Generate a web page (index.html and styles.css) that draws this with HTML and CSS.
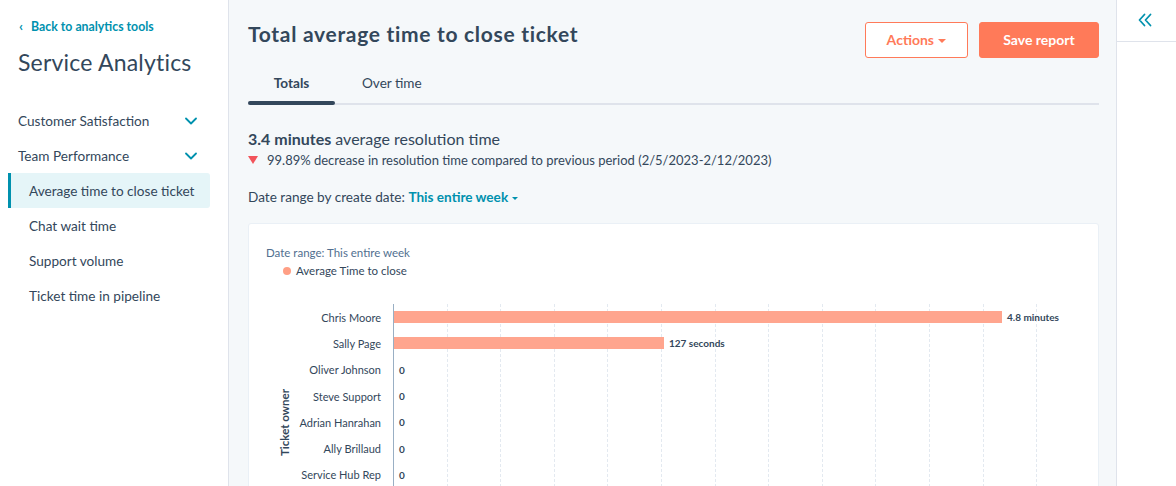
FILE: index.html
```html
<!DOCTYPE html>
<html>
<head>
<meta charset="utf-8">
<link rel="stylesheet" href="styles.css">
</head>
<body>
<div class="app">
  <aside class="sidebar">
    <a class="back" href="#"><span class="back-chev">‹</span>Back to analytics tools</a>
    <h1 class="side-title">Service Analytics</h1>
    <nav class="nav">
      <div class="nav-group">Customer Satisfaction
        <svg class="chev" width="12" height="8" viewBox="0 0 12 8"><path d="M1 1.5 L6 6.5 L11 1.5" fill="none" stroke="#0091ae" stroke-width="1.8" stroke-linecap="round" stroke-linejoin="round"/></svg>
      </div>
      <div class="nav-group">Team Performance
        <svg class="chev" width="12" height="8" viewBox="0 0 12 8"><path d="M1 1.5 L6 6.5 L11 1.5" fill="none" stroke="#0091ae" stroke-width="1.8" stroke-linecap="round" stroke-linejoin="round"/></svg>
      </div>
      <div class="nav-item active">Average time to close ticket</div>
      <div class="nav-item">Chat wait time</div>
      <div class="nav-item">Support volume</div>
      <div class="nav-item">Ticket time in pipeline</div>
    </nav>
  </aside>

  <main class="main">
    <header class="header">
      <h2 class="title">Total average time to close ticket</h2>
      <div class="actions">
        <button class="btn btn-secondary">Actions <span class="caret"></span></button>
        <button class="btn btn-primary">Save report</button>
      </div>
    </header>
    <div class="tabs">
      <div class="tab active">Totals</div>
      <div class="tab">Over time</div>
    </div>

    <section class="summary">
      <p class="headline"><strong>3.4 minutes</strong> average resolution time</p>
      <p class="change"><span class="down"></span>99.89% decrease in resolution time compared to previous period (2/5/2023-2/12/2023)</p>
      <p class="range">Date range by create date: <a class="range-link" href="#">This entire week <span class="caret small"></span></a></p>
    </section>

    <section class="card">
      <div class="card-meta">Date range: This entire week</div>
      <div class="legend"><span class="dot"></span>Average Time to close</div>
      <div class="chart">
        <div class="axis-title"><span>Ticket owner</span></div>
        <div class="labels">
          <div class="lbl">Chris Moore</div>
          <div class="lbl">Sally Page</div>
          <div class="lbl">Oliver Johnson</div>
          <div class="lbl">Steve Support</div>
          <div class="lbl">Adrian Hanrahan</div>
          <div class="lbl">Ally Brillaud</div>
          <div class="lbl">Service Hub Rep</div>
        </div>
        <div class="plot">
          <div class="row"><div class="bar" style="width:608px"></div><span class="val">4.8 minutes</span></div>
          <div class="row"><div class="bar" style="width:270px"></div><span class="val">127 seconds</span></div>
          <div class="row"><span class="val">0</span></div>
          <div class="row"><span class="val">0</span></div>
          <div class="row"><span class="val">0</span></div>
          <div class="row"><span class="val">0</span></div>
          <div class="row"><span class="val">0</span></div>
        </div>
      </div>
    </section>
  </main>

  <aside class="rail">
    <div class="rail-top">
      <svg width="16" height="14" viewBox="0 0 16 14"><path d="M7.5 1.5 L2.5 7 L7.5 12.5 M13.5 1.5 L8.5 7 L13.5 12.5" fill="none" stroke="#0091ae" stroke-width="1.8" stroke-linecap="round" stroke-linejoin="round"/></svg>
    </div>
  </aside>
</div>
</body>
</html>
```

FILE: styles.css
```css
* { box-sizing: border-box; }
html, body { margin: 0; padding: 0; }
body {
  font-family: "Lato", "Noto Sans", sans-serif;
  color: #33475b;
  background: #fff;
  width: 1176px;
  height: 486px;
  overflow: hidden;
}
p, h1, h2 { margin: 0; }
a { text-decoration: none; }

.app { display: flex; height: 486px; }

/* Sidebar */
.sidebar {
  width: 229px;
  flex: none;
  border-right: 1px solid #dfe3eb;
  padding: 18px 18px 0 8px;
}
.back {
  display: flex;
  align-items: center;
  color: #0091ae;
  font-size: 12.3px;
  font-weight: 700;
  padding-left: 11px;
  height: 16px;
}
.back-chev { font-size: 14px; margin-right: 8px; line-height: 1; }
.side-title {
  font-size: 23px;
  font-weight: 400;
  margin: 13px 0 0 10px;
  line-height: 30px;
  letter-spacing: 0.2px;
}
.nav { margin-top: 30px; display: flex; flex-direction: column; }
.nav-group, .nav-item {
  height: 35px;
  display: flex;
  align-items: center;
  font-size: 13.6px;
}
.nav-group { padding-left: 10px; justify-content: space-between; padding-right: 13px; }
.nav-item { padding-left: 21px; border-radius: 0 3px 3px 0; }
.nav-item.active {
  background: #e5f5f8;
  border-left: 3px solid #0091ae;
  padding-left: 18px;
}
.nav-group:first-child { margin-top: -4px; }

/* Main */
.main {
  flex: 1;
  background: #f5f8fa;
  padding: 0 17px 0 19px;
  border-right: 1px solid #dfe3eb;
  display: flex;
  flex-direction: column;
  min-width: 0;
}
.header {
  display: flex;
  justify-content: space-between;
  align-items: center;
  padding-top: 22px;
  height: 57px;
}
.title { font-size: 21px; font-weight: 700; letter-spacing: 0.7px; margin-top: -12px; }
.actions { display: flex; gap: 11px; }
.btn {
  height: 36px;
  font-family: inherit;
  font-size: 14px;
  font-weight: 700;
  border-radius: 3px;
  padding: 0;
  cursor: pointer;
}
.btn-secondary {
  width: 103px;
  background: #fff;
  color: #ff7a59;
  border: 1px solid #ff7a59;
}
.btn-primary {
  width: 120px;
  background: #ff7a59;
  color: #fff;
  border: 1px solid #ff7a59;
}
.caret {
  display: inline-block;
  width: 0; height: 0;
  border-left: 4px solid transparent;
  border-right: 4px solid transparent;
  border-top: 4px solid currentColor;
  vertical-align: middle;
  margin-left: 1px;
}
.caret.small { border-left-width: 3.5px; border-right-width: 3.5px; border-top-width: 3.5px; }

.tabs {
  display: flex;
  margin-top: 6px;
  border-bottom: 2px solid #dfe3eb;
}
.tab {
  height: 40px;
  display: flex;
  align-items: center;
  justify-content: center;
  font-size: 13.6px;
  padding: 0 27px;
  position: relative;
}
.tab:first-child { width: 87px; padding: 0; }
.tab.active { font-weight: 700; }
.tab.active::after {
  content: "";
  position: absolute;
  left: 0; right: 0; bottom: -2px;
  height: 4px;
  background: #33475b;
  border-radius: 2px;
}

.summary { padding-top: 24px; }
.headline { font-size: 16px; line-height: 20px; }
.headline strong { font-weight: 700; }
.change {
  font-size: 13px;
  margin-top: 2px;
  display: flex;
  align-items: center;
  line-height: 18px;
}
.down {
  width: 0; height: 0;
  border-left: 5.5px solid transparent;
  border-right: 5.5px solid transparent;
  border-top: 8px solid #f2545b;
  margin-right: 9px;
}
.range { font-size: 13.6px; margin-top: 19px; line-height: 18px; }
.range-link { color: #0091ae; font-weight: 700; }

/* Card */
.card {
  margin-top: 17px;
  background: #fff;
  border: 1px solid #eaf0f6;
  border-radius: 3px;
  padding: 21px 0 0 17px;
  flex: 1;
}
.card-meta { font-size: 11.5px; color: #516f90; line-height: 16px; }
.legend {
  font-size: 11.5px;
  display: flex;
  align-items: center;
  padding-left: 17px;
  line-height: 16px;
  margin-top: 2px;
}
.dot {
  width: 8px; height: 8px;
  border-radius: 50%;
  background: #ff9f85;
  margin-right: 5px;
}
.chart {
  display: flex;
  margin-top: 25px;
  height: 237px;
}
.axis-title {
  width: 36px;
  display: flex;
  align-items: center;
  justify-content: center;
}
.axis-title span {
  transform: rotate(-90deg);
  white-space: nowrap;
  font-weight: 700;
  font-size: 11.5px;
}
.labels {
  width: 91px;
  padding-right: 12px;
  display: flex;
  flex-direction: column;
}
.lbl {
  height: 26.3px;
  display: flex;
  align-items: center;
  justify-content: flex-end;
  font-size: 11px;
  white-space: nowrap;
}
.plot {
  width: 650px;
  border-left: 1px solid #99afc4;
  background:
    repeating-linear-gradient(to bottom, transparent 0 3px, #fff 3px 5px),
    repeating-linear-gradient(to right, transparent 0 52.6px, #e3e9f0 52.6px 53.6px);
  display: flex;
  flex-direction: column;
}
.row {
  height: 26.3px;
  display: flex;
  align-items: center;
}
.bar {
  height: 12px;
  background: #ffa58e;
  flex: none;
}
.val {
  font-size: 10px;
  font-weight: 700;
  margin-left: 5px;
  white-space: nowrap;
}

/* Right rail */
.rail { width: 59px; flex: none; background: #fff; }
.rail-top {
  height: 42px;
  border-bottom: 1px solid #dfe3eb;
  display: flex;
  align-items: center;
  padding-left: 20px;
  padding-bottom: 2px;
}
```
